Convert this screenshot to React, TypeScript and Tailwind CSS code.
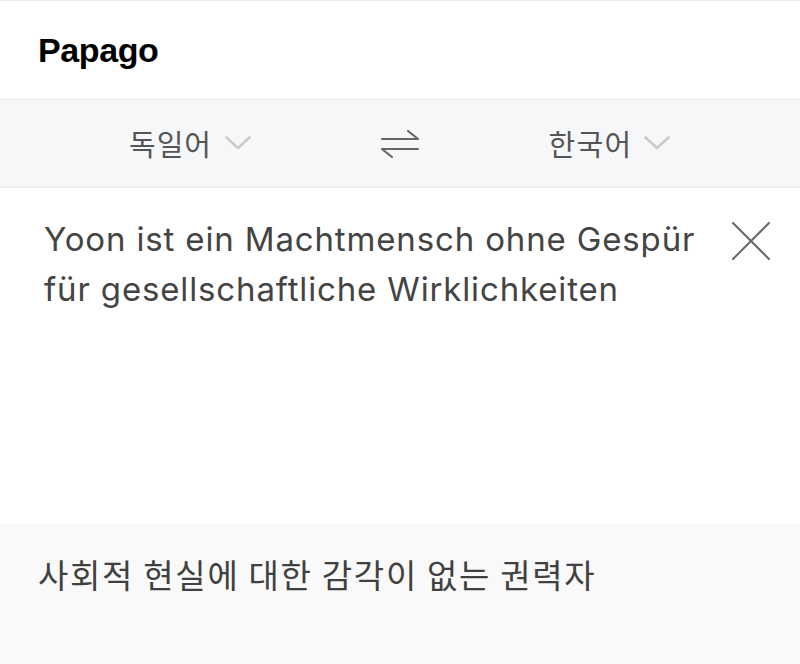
function Chevron() {
  return (
    <svg width="26" height="14" viewBox="0 0 26 14" fill="none" className="shrink-0">
      <path d="M1.5 1.5 L13 12 L24.5 1.5" stroke="#cbcbcb" strokeWidth="2.6" strokeLinecap="round" strokeLinejoin="round" />
    </svg>
  );
}

function SwapIcon() {
  return (
    <svg width="40" height="30" viewBox="0 0 40 30" fill="none">
      <path d="M2 10 H38 L28 2" stroke="#666" strokeWidth="2.2" strokeLinecap="round" strokeLinejoin="round" />
      <path d="M38 20 H2 L12 28" stroke="#666" strokeWidth="2.2" strokeLinecap="round" strokeLinejoin="round" />
    </svg>
  );
}

function ClearIcon() {
  return (
    <svg width="38" height="38" viewBox="0 0 38 38" fill="none">
      <path d="M1 1 L37 37 M37 1 L1 37" stroke="#666" strokeWidth="2" strokeLinecap="round" />
    </svg>
  );
}

export default function App() {
  const latin = { fontFamily: 'Inter, "Noto Sans CJK KR", sans-serif' };
  const korean = { fontFamily: '"Noto Sans CJK KR", "Liberation Sans", sans-serif' };

  return (
    <div className="w-[800px] h-[664px] bg-white flex flex-col overflow-hidden" style={latin}>
      {/* Header */}
      <div className="h-[100px] border-t border-[#ececec] border-b border-b-[#e6e8eb] flex items-center px-[38px] shrink-0">
        <h1 className="text-[34px] font-bold text-black leading-none tracking-[-0.4px] pb-[1px]" style={{ fontFamily: '"Liberation Sans", sans-serif' }}>
          Papago
        </h1>
      </div>

      {/* Language bar */}
      <div className="h-[88px] bg-[#f6f7f9] border-b-2 border-[#eceef1] grid grid-cols-[1fr_auto_1fr] items-center shrink-0">
        <div className="flex items-center justify-center gap-[13px] pl-[22px]" style={korean}>
          <span className="text-[29px] text-[#555] leading-none tracking-[1px]">독일어</span>
          <Chevron />
        </div>
        <div className="px-[22px] pt-[2px]">
          <SwapIcon />
        </div>
        <div className="flex items-center justify-center gap-[11px] pr-[24px]" style={korean}>
          <span className="text-[29px] text-[#555] leading-none tracking-[1.4px]">한국어</span>
          <Chevron />
        </div>
      </div>

      {/* Input */}
      <div className="flex-1 flex items-start pl-[44px] pr-[30px] pt-[26px]">
        <p className="flex-1 text-[33px] leading-[50px] text-[#444] tracking-[0.85px]">
          Yoon ist ein Machtmensch ohne Gespür
          <br />
          für gesellschaftliche Wirklichkeiten
        </p>
        <button className="mt-[8px] shrink-0">
          <ClearIcon />
        </button>
      </div>

      {/* Output */}
      <div className="h-[140px] bg-[#f9f9f9] px-[38px] pt-[28px] shrink-0" style={korean}>
        <p className="text-[33px] text-[#404040] leading-[44px] tracking-[1.7px]">사회적 현실에 대한 감각이 없는 권력자</p>
      </div>
    </div>
  );
}
